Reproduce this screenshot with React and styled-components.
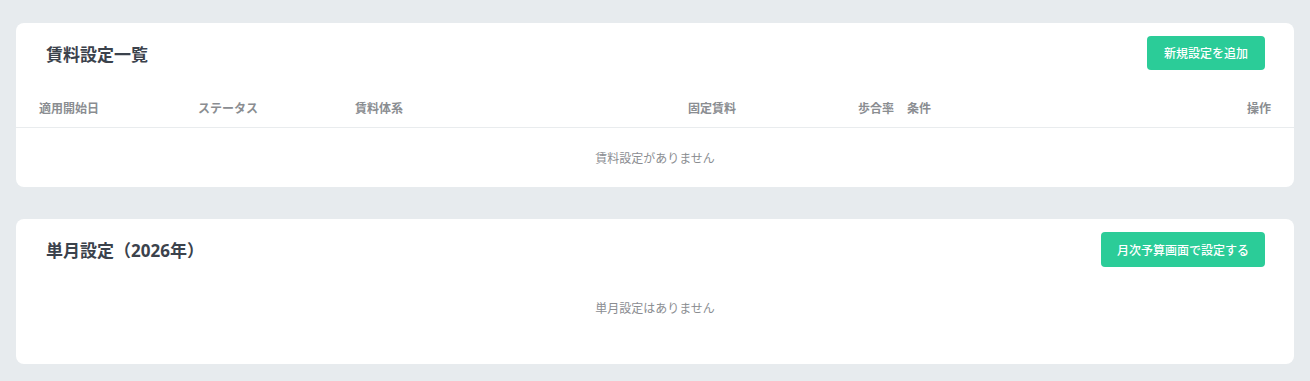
import React from "react";
import styled, { createGlobalStyle } from "styled-components";

const GlobalStyle = createGlobalStyle`
  * { box-sizing: border-box; }
  body {
    margin: 0;
    background: #e7ebee;
    font-family: "Noto Sans", "Noto Sans CJK JP", sans-serif;
    color: #3b424c;
  }
`;

const Page = styled.div`
  display: flex;
  flex-direction: column;
  gap: 32px;
  padding: 23px 16px 17px;
`;

const Card = styled.section`
  background: #fff;
  border-radius: 8px;
  overflow: hidden;
`;

const CardHeader = styled.div`
  display: flex;
  justify-content: space-between;
  align-items: center;
  padding: 13px 29px ${(p) => p.$bottom || 13}px 30px;
`;

const Title = styled.h2`
  margin: 0;
  font-size: 17px;
  font-weight: 700;
  color: #3b424c;
`;

const Button = styled.button`
  height: ${(p) => p.$h || 34}px;
  padding: 0 ${(p) => p.$px || 17}px;
  border: none;
  border-radius: 4px;
  background: #2bcc98;
  color: #fff;
  font-family: inherit;
  font-size: 12px;
  font-weight: 500;
  cursor: pointer;
`;

const HeadRow = styled.div`
  display: grid;
  grid-template-columns: 159px 157px 221px 160px 158px 1fr 100px;
  align-items: center;
  height: 40px;
  padding: 0 23px;
  border-bottom: 1px solid #e9ecee;
`;

const HeadCell = styled.div`
  font-size: 12px;
  font-weight: 600;
  color: #8a8d91;
  text-align: ${(p) => p.$align || "left"};
  padding-left: ${(p) => p.$indent || 0}px;
  white-space: nowrap;
`;

const Empty = styled.div`
  display: flex;
  justify-content: center;
  align-items: center;
  height: ${(p) => p.$h}px;
  padding-bottom: ${(p) => p.$pb || 0}px;
  font-size: 12px;
  color: #8a8d91;
`;

const columns = [
  { label: "適用開始日" },
  { label: "ステータス" },
  { label: "賃料体系" },
  { label: "固定賃料", align: "right" },
  { label: "歩合率", align: "right" },
  { label: "条件", indent: 13 },
  { label: "操作", align: "right" },
];

export default function App() {
  return (
    <Page>
      <GlobalStyle />
      <Card>
        <CardHeader $bottom={18}>
          <Title>賃料設定一覧</Title>
          <Button>新規設定を追加</Button>
        </CardHeader>
        <HeadRow>
          {columns.map((c) => (
            <HeadCell key={c.label} $align={c.align} $indent={c.indent}>
              {c.label}
            </HeadCell>
          ))}
        </HeadRow>
        <Empty $h={59}>賃料設定がありません</Empty>
      </Card>
      <Card>
        <CardHeader>
          <Title>単月設定（2026年）</Title>
          <Button $h={35} $px={16}>
            月次予算画面で設定する
          </Button>
        </CardHeader>
        <Empty $h={84} $pb={28}>
          単月設定はありません
        </Empty>
      </Card>
    </Page>
  );
}
